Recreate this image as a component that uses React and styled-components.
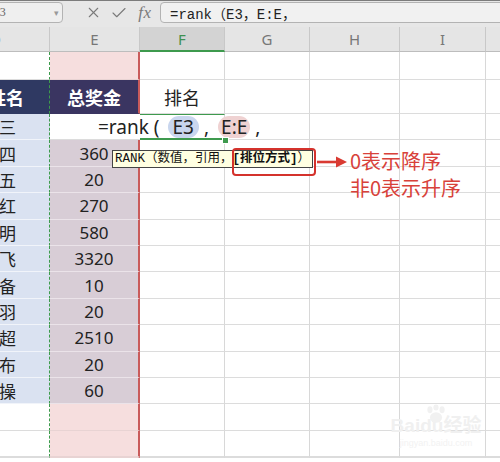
import React from "react";
import styled, { createGlobalStyle } from "styled-components";
import { X, Check } from "lucide-react";

const GlobalStyle = createGlobalStyle`
  html, body { margin: 0; padding: 0; background: #fff; }
  body { font-family: "Noto Sans", "Noto Sans CJK SC", sans-serif; }
`;

const COLS = ["D", "E", "F", "G", "H", "I", "J"];
const NAMES = ["张三", "李四", "王五", "小红", "小明", "张飞", "刘备", "关羽", "马超", "吕布", "曹操"];
const VALUES = [null, "360", "20", "270", "580", "3320", "10", "20", "2510", "20", "60"];

const D_TONES = {
  white: { bg: "#fff", rule: "#dcdcdc", color: "#222" },
  navy: { bg: "#2f3962", rule: "#2f3962", color: "#fff" },
  blue: { bg: "#dae2f1", rule: "#f1f4fa", color: "#222" },
};

const E_TONES = {
  pink: { bg: "#f6dede", rule: "#e8d3d3", color: "#222" },
  navy: { bg: "#3a3561", rule: "#3a3561", color: "#fff" },
  mauve: { bg: "#d8cdd6", rule: "#ebe3e9", color: "#222" },
  white: { bg: "#fff", rule: "#dcdcdc", color: "#222" },
};

export default function App() {
  return (
    <>
      <GlobalStyle />
      <Page>
        <FormulaBar>
          <NameBox>
            <span>F3</span>
            <Caret>▾</Caret>
          </NameBox>
          <Tools>
            <IconSlot>
              <X size={17} strokeWidth={1.5} />
            </IconSlot>
            <IconSlot>
              <Check size={18} strokeWidth={1.5} />
            </IconSlot>
            <IconSlot>
              <Fx>fx</Fx>
            </IconSlot>
          </Tools>
          <FormulaInput>=rank（E3，E:E，</FormulaInput>
        </FormulaBar>

        <Sheet>
          {COLS.map((c) => (
            <ColHead key={c} $active={c === "F"} $cut={c === "D"}>
              {c}
            </ColHead>
          ))}

          <DCell $tone="white" />
          <ECell $tone="pink" />
          {[0, 1, 2, 3, 4].map((k) => (
            <GridCell key={"r1" + k} />
          ))}

          <DCell $tone="navy">姓名</DCell>
          <ECell $tone="navy">总奖金</ECell>
          <GridCell>排名</GridCell>
          {[0, 1, 2, 3].map((k) => (
            <GridCell key={"r2" + k} />
          ))}

          {NAMES.map((n, i) => (
            <React.Fragment key={n}>
              <DCell $tone="blue">{n}</DCell>
              <ECell $tone={i === 0 ? "white" : "mauve"} $open={i === 0}>
                {VALUES[i]}
              </ECell>
              <GridCell $editing={i === 0} />
              {[0, 1, 2, 3].map((k) => (
                <GridCell key={k} />
              ))}
            </React.Fragment>
          ))}

          {[0, 1, 2].map((r) => (
            <React.Fragment key={"tail" + r}>
              <DCell $tone="white" />
              <ECell $tone="pink" />
              {[0, 1, 2, 3, 4].map((k) => (
                <GridCell key={k} />
              ))}
            </React.Fragment>
          ))}
        </Sheet>

        <Editor>
          <span>=rank (</span>
          <Ref $tone="blue">E3</Ref>
          <Comma>,</Comma>
          <Ref $tone="pink">E:E</Ref>
          <Comma>,</Comma>
        </Editor>
        <Handle />

        <Tip>
          RANK（数值，引用，<b>[排位方式]</b>）
        </Tip>
        <Highlight />
        <Arrow width="32" height="14" viewBox="0 0 32 14">
          <line x1="1" y1="7" x2="22" y2="7" stroke="#d93a32" strokeWidth="2.6" />
          <polygon points="20,1.5 31,7 20,12.5" fill="#d93a32" />
        </Arrow>
        <Note>
          <div>0表示降序</div>
          <div>非0表示升序</div>
        </Note>

        <Watermark>
          <Paw width="26" height="20" viewBox="0 0 30 22">
            <ellipse cx="8" cy="6" rx="3" ry="4" />
            <ellipse cx="15" cy="3.5" rx="3" ry="3.5" />
            <ellipse cx="22" cy="6" rx="3" ry="4" />
            <ellipse cx="15" cy="15" rx="7" ry="6" />
          </Paw>
          <Brand>Baidu经验</Brand>
          <Site>jingyan.baidu.com</Site>
        </Watermark>
      </Page>
    </>
  );
}

const Page = styled.div`
  position: relative;
  width: 500px;
  height: 462px;
  overflow: hidden;
  background: #fff;
`;

const FormulaBar = styled.div`
  display: flex;
  align-items: center;
  height: 27px;
  box-sizing: border-box;
  border-top: 1px solid #7c7c7c;
  padding-bottom: 3px;
  background: #e7e7e7;
`;

const NameBox = styled.div`
  box-sizing: border-box;
  display: flex;
  align-items: center;
  justify-content: space-between;
  width: 69px;
  height: 21px;
  margin-left: -6px;
  padding: 0 3px 0 0;
  border: 1px solid #b3b3b3;
  border-radius: 4px;
  background: #efefef;
  font: 12px "Liberation Serif", serif;
  color: #666;
  span {
    margin-left: -2px;
  }
`;

const Caret = styled.i`
  font-style: normal;
  font-size: 9px;
  color: #999;
`;

const Tools = styled.div`
  display: flex;
  margin-left: 17px;
`;

const IconSlot = styled.div`
  display: flex;
  align-items: center;
  justify-content: center;
  width: 26px;
  height: 21px;
  color: #7a7a7a;
`;

const Fx = styled.span`
  font: italic 17px "Liberation Serif", serif;
  color: #7a7a7a;
  letter-spacing: 0.5px;
`;

const FormulaInput = styled.div`
  box-sizing: border-box;
  flex: 1;
  display: flex;
  align-items: center;
  height: 21px;
  margin-left: 2px;
  margin-right: -10px;
  padding-left: 9px;
  border: 1px solid #b3b3b3;
  border-radius: 4px;
  background: #f1f1f1;
  font: 14px "Liberation Mono", "Noto Sans CJK SC", monospace;
  color: #222;
  white-space: nowrap;
`;

const Sheet = styled.div`
  display: grid;
  grid-template-columns: 50px 90px 85px 85px 90px 86px 60px;
  grid-template-rows: 25px 28px 34px repeat(13, 26.4px);
`;

const ColHead = styled.div`
  box-sizing: border-box;
  display: flex;
  align-items: center;
  justify-content: ${(p) => (p.$cut ? "flex-end" : "center")};
  padding-right: ${(p) => (p.$cut ? 48 : 0)}px;
  overflow: hidden;
  background: ${(p) => (p.$active ? "#d3d3d3" : "#e5e5e5")};
  color: ${(p) => (p.$active ? "#3f9150" : "#777")};
  border-right: 1px solid #c8c8c8;
  border-bottom: ${(p) => (p.$active ? "2px solid #3e9a4e" : "1px solid #bdbdbd")};
  font: 15px "Noto Sans", sans-serif;
`;

const DCell = styled.div`
  box-sizing: border-box;
  display: flex;
  align-items: center;
  justify-content: flex-end;
  padding-right: ${(p) => (p.$tone === "navy" ? 25 : 33)}px;
  overflow: hidden;
  white-space: nowrap;
  background: ${(p) => D_TONES[p.$tone].bg};
  color: ${(p) => D_TONES[p.$tone].color};
  border-bottom: 1px solid ${(p) => D_TONES[p.$tone].rule};
  border-right: 1px dashed #3d9b4c;
  font-size: ${(p) => (p.$tone === "navy" ? 18 : 17)}px;
  font-weight: ${(p) => (p.$tone === "navy" ? 700 : 400)};
`;

const ECell = styled.div`
  box-sizing: border-box;
  display: flex;
  align-items: center;
  justify-content: center;
  background: ${(p) => E_TONES[p.$tone].bg};
  color: ${(p) => E_TONES[p.$tone].color};
  border-bottom: 1px solid ${(p) => E_TONES[p.$tone].rule};
  border-right: ${(p) => (p.$open ? "none" : "2px solid #c95b5b")};
  font-size: ${(p) => (p.$tone === "navy" ? 18 : 17)}px;
  font-weight: ${(p) => (p.$tone === "navy" ? 700 : 400)};
`;

const GridCell = styled.div`
  box-sizing: border-box;
  display: flex;
  align-items: center;
  justify-content: center;
  border-right: 1px solid #d8d8d8;
  border-top: ${(p) => (p.$editing ? "1px solid #3e9a4e" : "none")};
  border-bottom: ${(p) => (p.$editing ? "2px solid #3e9a4e" : "1px solid #dcdcdc")};
  font-size: 18px;
  color: #222;
`;

const Editor = styled.div`
  position: absolute;
  left: 98px;
  top: 114px;
  height: 26px;
  display: flex;
  align-items: center;
  font: 19px "Noto Sans", sans-serif;
  color: #222;
  white-space: nowrap;
`;

const Ref = styled.span`
  display: inline-flex;
  align-items: center;
  height: 22px;
  margin-left: ${(p) => (p.$tone === "blue" ? 8 : 9)}px;
  padding: 0 ${(p) => (p.$tone === "blue" ? 5 : 3)}px;
  border-radius: 11px;
  background: ${(p) => (p.$tone === "blue" ? "#c9d6ee" : "#efd2d2")};
`;

const Comma = styled.span`
  margin-left: 5px;
`;

const Handle = styled.div`
  position: absolute;
  left: 222px;
  top: 137px;
  width: 5px;
  height: 5px;
  background: #3e9a4e;
  border: 1px solid #fff;
`;

const Tip = styled.div`
  position: absolute;
  left: 112px;
  top: 150px;
  height: 18px;
  box-sizing: border-box;
  padding: 0 2px;
  border: 1px solid #444;
  background: #ffffe1;
  font: 12.5px "Liberation Mono", "Noto Sans CJK SC", monospace;
  line-height: 16px;
  color: #111;
  white-space: nowrap;
  b {
    font-weight: 700;
  }
`;

const Highlight = styled.div`
  position: absolute;
  left: 232px;
  top: 148px;
  width: 84px;
  height: 28px;
  box-sizing: border-box;
  border: 2px solid #d4322c;
  border-radius: 4px;
`;

const Arrow = styled.svg`
  position: absolute;
  left: 316px;
  top: 155px;
`;

const Note = styled.div`
  position: absolute;
  left: 350px;
  top: 147px;
  font: 20px "Noto Sans CJK SC", sans-serif;
  line-height: 27px;
  color: #d8413a;
  white-space: nowrap;
`;

const Watermark = styled.div`
  position: absolute;
  left: 386px;
  top: 404px;
  width: 100px;
  display: flex;
  flex-direction: column;
  align-items: center;
  pointer-events: none;
`;

const Paw = styled.svg`
  fill: #f1f1f1;
  margin-bottom: -9px;
`;

const Brand = styled.div`
  font: 700 19px "Liberation Sans", "Noto Sans CJK SC", sans-serif;
  line-height: 22px;
  white-space: nowrap;
  color: #f0f0f0;
`;

const Site = styled.div`
  font: 9px "Liberation Sans", sans-serif;
  line-height: 12px;
  white-space: nowrap;
  color: #f2f2f2;
`;
